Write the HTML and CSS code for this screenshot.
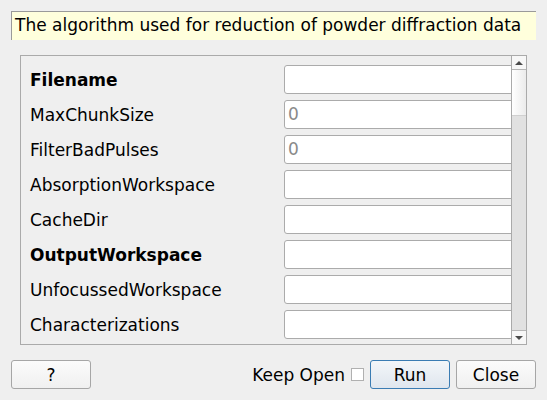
FILE: index.html
```html
<!DOCTYPE html>
<html>
<head>
<meta charset="utf-8">
<link rel="stylesheet" href="styles.css">
</head>
<body>
<div class="tooltip">The algorithm used for reduction of powder diffraction data</div>
<div class="frame">
  <div class="viewport">
    <div class="row"><span class="label bold">Filename</span><span class="field"></span></div>
    <div class="row"><span class="label">MaxChunkSize</span><span class="field"><span class="ph">0</span></span></div>
    <div class="row"><span class="label">FilterBadPulses</span><span class="field"><span class="ph">0</span></span></div>
    <div class="row"><span class="label">AbsorptionWorkspace</span><span class="field"></span></div>
    <div class="row"><span class="label">CacheDir</span><span class="field"></span></div>
    <div class="row"><span class="label bold">OutputWorkspace</span><span class="field"></span></div>
    <div class="row"><span class="label">UnfocussedWorkspace</span><span class="field"></span></div>
    <div class="row"><span class="label">Characterizations</span><span class="field"></span></div>
  </div>
  <div class="scrollbar">
    <div class="sb-btn sb-up"><span class="arrow-up"></span></div>
    <div class="sb-handle"></div>
    <div class="sb-track"></div>
    <div class="sb-btn sb-down"><span class="arrow-down"></span></div>
  </div>
</div>
<div class="buttons">
  <button class="btn">?</button>
  <div class="right">
    <span class="keep">Keep Open</span>
    <span class="checkbox"></span>
    <button class="btn run">Run</button>
    <button class="btn">Close</button>
  </div>
</div>
</body>
</html>
```

FILE: styles.css
```css
html, body {
  margin: 0;
  padding: 0;
  background: #efefef;
  font-family: "DejaVu Sans", sans-serif;
  font-size: 17px;
  color: #000;
}
body {
  width: 547px;
  height: 400px;
  overflow: hidden;
}
.tooltip {
  margin: 11px 0 0 11px;
  width: 521px;
  height: 28px;
  box-sizing: content-box;
  border-left: 1px solid #9a9a9a;
  border-top: 1px solid #9a9a9a;
  background: #ffffdc;
  padding-left: 3px;
  line-height: 27px;
  white-space: nowrap;
}
.frame {
  margin: 15px 0 0 20px;
  width: 507px;
  height: 290px;
  box-sizing: border-box;
  border: 1px solid #aaaaaa;
  display: flex;
}
.viewport {
  width: 491px;
  overflow: hidden;
  padding: 9px 0 0 9px;
  box-sizing: border-box;
  display: flex;
  flex-direction: column;
  gap: 6px;
}
.row {
  display: flex;
  align-items: center;
  height: 29px;
  flex: none;
}
.label {
  width: 254px;
  flex: none;
  white-space: nowrap;
}
.bold { font-weight: bold; }
.field {
  flex: none;
  width: 240px;
  height: 29px;
  box-sizing: border-box;
  border: 1px solid #ababab;
  border-radius: 3px;
  background: #ffffff;
  padding-left: 3px;
  line-height: 27px;
}
.ph { color: #8a8a8a; }
.scrollbar {
  width: 14px;
  border-left: 1px solid #aaaaaa;
  display: flex;
  flex-direction: column;
  flex: none;
}
.sb-btn {
  height: 13px;
  background: #f7f7f7;
  display: flex;
  align-items: center;
  justify-content: center;
  flex: none;
}
.sb-up { border-bottom: 1px solid #b5b5b5; }
.sb-down { border-top: 1px solid #b5b5b5; }
.arrow-up {
  width: 0; height: 0;
  border-left: 4px solid transparent;
  border-right: 4px solid transparent;
  border-bottom: 4px solid #4a4a4a;
}
.arrow-down {
  width: 0; height: 0;
  border-left: 4px solid transparent;
  border-right: 4px solid transparent;
  border-top: 4px solid #4a4a4a;
}
.sb-handle {
  height: 45px;
  flex: none;
  background: linear-gradient(to right, #ffffff, #ebebeb);
  border-bottom: 1px solid #d0d0d0;
}
.sb-track {
  flex: 1;
  background: #e1e1e1;
}
.buttons {
  margin: 15px 0 0 11px;
  width: 525px;
  display: flex;
  justify-content: space-between;
  align-items: center;
}
.right {
  display: flex;
  align-items: center;
}
.btn {
  width: 80px;
  height: 29px;
  box-sizing: border-box;
  border: 1px solid #a6a6a6;
  border-radius: 3px;
  background: linear-gradient(to bottom, #fbfbfb, #f0f0f0);
  font-family: "DejaVu Sans", sans-serif;
  font-size: 17px;
  color: #000;
  padding: 0;
}
.run {
  border-color: #3a7cb3;
  background: linear-gradient(to bottom, #f3f6f9, #dfe6ee);
  margin-right: 6px;
}
.keep {
  margin-right: 6px;
}
.checkbox {
  width: 13px;
  height: 13px;
  box-sizing: border-box;
  border: 1px solid #b0b0b0;
  background: #fff;
  margin-right: 6px;
}
```
